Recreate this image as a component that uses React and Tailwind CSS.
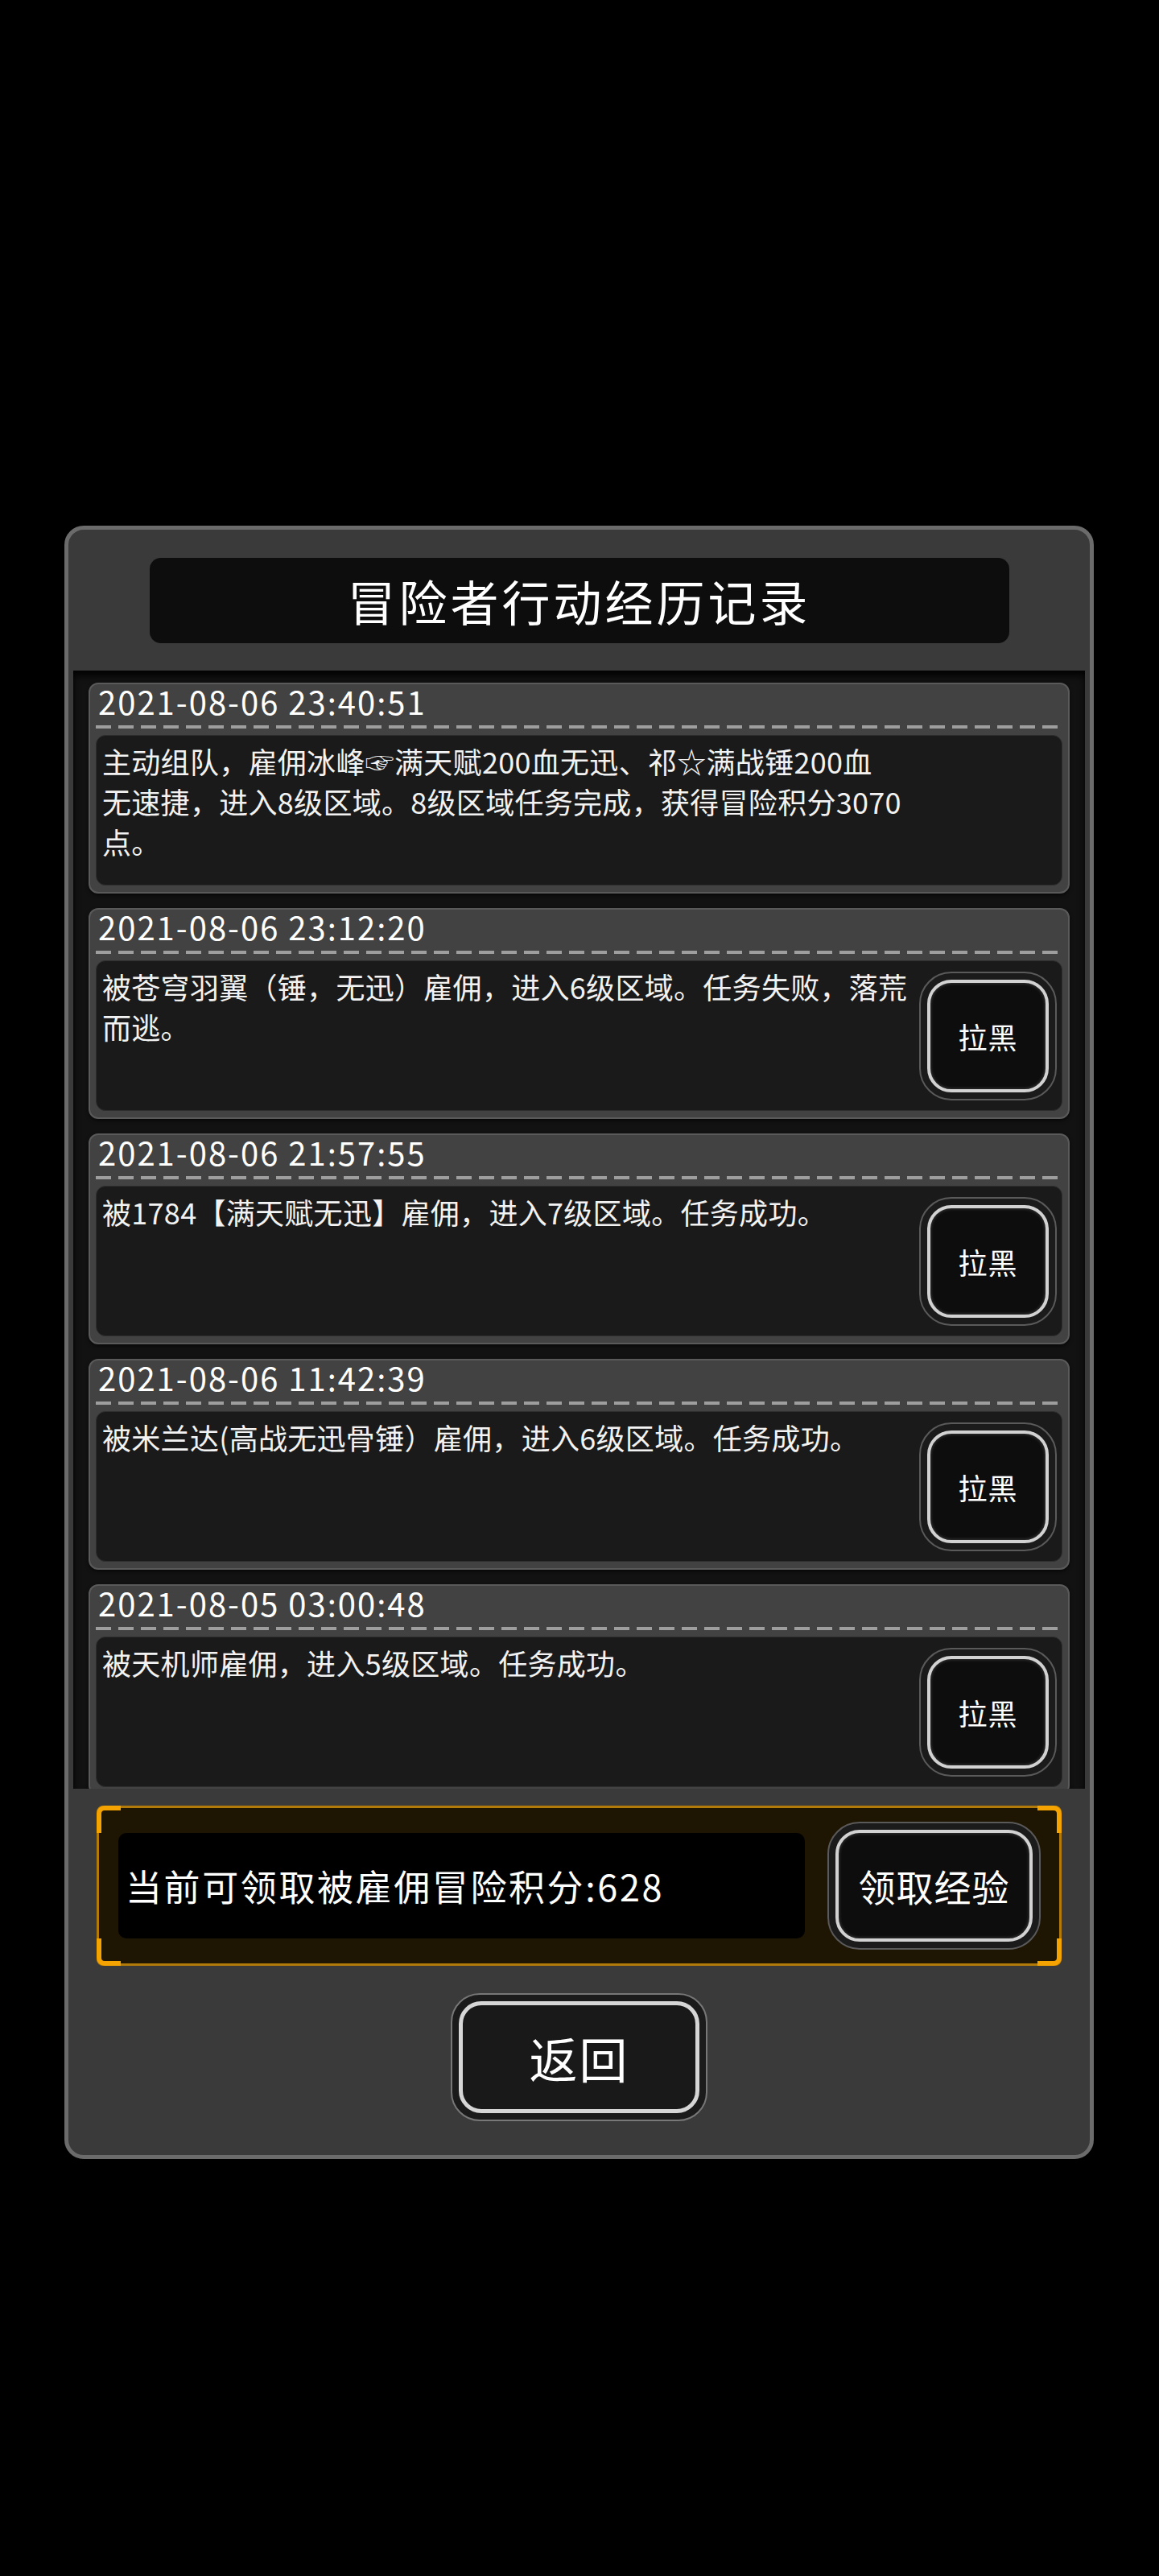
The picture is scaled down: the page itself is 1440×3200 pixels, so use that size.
import React from "react";

const records = [
  {
    time: "2021-08-06 23:40:51",
    lines: [
      "主动组队，雇佣冰峰☞满天赋200血无迅、祁☆满战锤200血",
      "无速捷，进入8级区域。8级区域任务完成，获得冒险积分3070",
      "点。",
    ],
    block: false,
  },
  {
    time: "2021-08-06 23:12:20",
    lines: ["被苍穹羽翼（锤，无迅）雇佣，进入6级区域。任务失败，落荒", "而逃。"],
    block: true,
  },
  {
    time: "2021-08-06 21:57:55",
    lines: ["被1784【满天赋无迅】雇佣，进入7级区域。任务成功。"],
    block: true,
  },
  {
    time: "2021-08-06 11:42:39",
    lines: ["被米兰达(高战无迅骨锤）雇佣，进入6级区域。任务成功。"],
    block: true,
  },
  {
    time: "2021-08-05 03:00:48",
    lines: ["被天机师雇佣，进入5级区域。任务成功。"],
    block: true,
  },
];

const BlockButton = () => (
  <div className="mr-[6px] w-[171px] h-[160px] shrink-0 rounded-[40px] bg-[#1b1b1b] border-[2px] border-[#5a5a5a] p-[8px]">
    <div className="w-full h-full rounded-[30px] border-[4px] border-[#d2d2d2] bg-[#0d0d0d] shadow-[inset_0_0_4px_rgba(255,255,255,0.25)] flex items-center justify-center">
      <span className="text-[36px] text-white tracking-[1px]">拉黑</span>
    </div>
  </div>
);

const RecordCard = ({ record }) => (
  <div className="h-[262px] shrink-0 rounded-[12px] bg-[#424242] border-[2px] border-[#5a5a5a] px-[7px] pb-[8px] flex flex-col shadow-[0_2px_4px_rgba(0,0,0,0.6)]">
    <div className="h-[51px] pl-[3px] text-[40px] leading-[42px] text-white tracking-[2px]">
      {record.time}
    </div>
    <div className="h-[4px] bg-[repeating-linear-gradient(90deg,#9e9e9e_0px,#9e9e9e_19px,transparent_19px,transparent_28px)]" />
    <div className="mt-[8px] flex-1 rounded-[12px] bg-[#1a1a1a] border border-[#2e2e2e] flex items-center">
      <div className="self-start flex-1 pl-[7px] pt-[6px] text-[36px] leading-[50px] text-[#f2f2f2] tracking-[0.3px] whitespace-nowrap">
        {record.lines.map((line, i) => (
          <div key={i}>{line}</div>
        ))}
      </div>
      {record.block && <BlockButton />}
    </div>
  </div>
);

const Corner = ({ className }) => (
  <div className={`absolute w-[30px] h-[34px] border-[#f5a300] ${className}`} />
);

export default function App() {
  return (
    <div className="w-full h-[3200px] bg-black pt-[653px] font-['Noto_Sans_CJK_SC','Noto_Sans',sans-serif]">
      <div className="ml-[80px] w-[1279px] rounded-[24px] border-[5px] border-[#6b6b6b] bg-[#3a3a3a] px-[6px] pt-[35px] pb-[42px]">
        <div className="mx-auto w-[1068px] h-[106px] rounded-[14px] bg-[#0d0d0d] flex items-center justify-center">
          <span className="text-[60px] text-white tracking-[4px]">冒险者行动经历记录</span>
        </div>

        <div className="mt-[34px] h-[1389px] overflow-hidden bg-[#121212] shadow-[inset_0_6px_10px_rgba(0,0,0,0.9)] px-[19px] pt-[15px] flex flex-col gap-[18px]">
          {records.map((r) => (
            <RecordCard key={r.time} record={r} />
          ))}
        </div>

        <div className="relative mt-[21px] mx-auto w-[1199px] h-[199px] rounded-[8px] border-[3px] border-[#b27a08] bg-[#1f1503] flex items-center pl-[24px] pr-[23px]">
          <Corner className="-top-[3px] -left-[3px] border-t-[6px] border-l-[6px] rounded-tl-[10px]" />
          <Corner className="-top-[3px] -right-[3px] border-t-[6px] border-r-[6px] rounded-tr-[10px]" />
          <Corner className="-bottom-[3px] -left-[3px] border-b-[6px] border-l-[6px] rounded-bl-[10px]" />
          <Corner className="-bottom-[3px] -right-[3px] border-b-[6px] border-r-[6px] rounded-br-[10px]" />
          <div className="w-[853px] h-[131px] rounded-[10px] bg-black flex items-center pl-[9px]">
            <span className="text-[45px] text-white tracking-[2.6px] whitespace-nowrap">当前可领取被雇佣冒险积分:628</span>
          </div>
          <div className="ml-auto w-[265px] h-[159px] rounded-[40px] bg-[#1b1b1b] border-[2px] border-[#5a5a5a] p-[8px]">
            <div className="w-full h-full rounded-[30px] border-[4px] border-[#d2d2d2] bg-[#0d0d0d] shadow-[inset_0_0_4px_rgba(255,255,255,0.25)] flex items-center justify-center">
              <span className="text-[46px] text-white tracking-[1px]">领取经验</span>
            </div>
          </div>
        </div>

        <div className="mt-[34px] mx-auto w-[319px] h-[159px] rounded-[36px] bg-[#1b1b1b] border-[2px] border-[#777777] p-[8px]">
          <div className="w-full h-full rounded-[28px] border-[5px] border-[#d6d6d6] bg-[#191919] flex items-center justify-center">
            <span className="text-[60px] text-white tracking-[2px]">返回</span>
          </div>
        </div>
      </div>
    </div>
  );
}
